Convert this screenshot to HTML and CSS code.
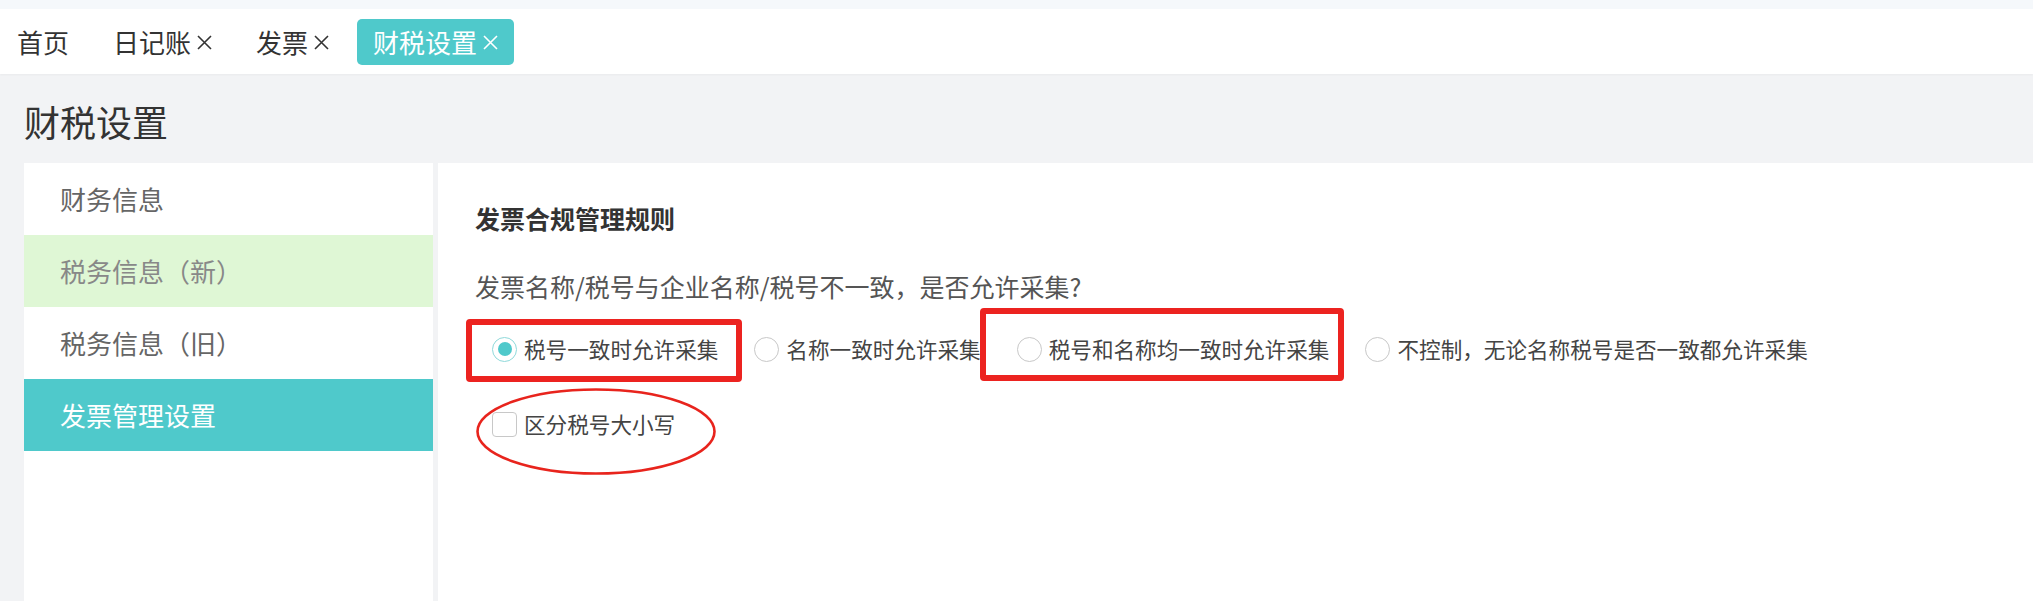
FILE: index.html
```html
<!DOCTYPE html>
<html lang="zh-CN">
<head>
<meta charset="utf-8">
<title>财税设置</title>
<link rel="stylesheet" href="styles.css">
</head>
<body>
<div class="topstrip"></div>
<div class="tabbar">
  <div class="tab">首页</div>
  <div class="tab">日记账<svg class="close" width="15" height="15" viewBox="0 0 15 15"><path d="M1 1L14 14M14 1L1 14" stroke="currentColor" stroke-width="1.6" fill="none"/></svg></div>
  <div class="tab">发票<svg class="close" width="15" height="15" viewBox="0 0 15 15"><path d="M1 1L14 14M14 1L1 14" stroke="currentColor" stroke-width="1.6" fill="none"/></svg></div>
  <div class="tab active">财税设置<svg class="close" width="15" height="15" viewBox="0 0 15 15"><path d="M1 1L14 14M14 1L1 14" stroke="currentColor" stroke-width="1.6" fill="none"/></svg></div>
</div>
<div class="header">财税设置</div>
<div class="layout">
  <div class="sidebar">
    <div class="item">财务信息</div>
    <div class="item hover">税务信息（新）</div>
    <div class="item">税务信息（旧）</div>
    <div class="item active">发票管理设置</div>
  </div>
  <div class="main">
    <div class="section-title">发票合规管理规则</div>
    <div class="question">发票名称/税号与企业名称/税号不一致，是否允许采集?</div>
    <div class="radios">
      <label class="radio checked"><span class="dot"></span><span class="text">税号一致时允许采集</span></label>
      <label class="radio"><span class="dot"></span><span class="text">名称一致时允许采集</span></label>
      <label class="radio"><span class="dot"></span><span class="text">税号和名称均一致时允许采集</span></label>
      <label class="radio"><span class="dot"></span><span class="text">不控制，无论名称税号是否一致都允许采集</span></label>
    </div>
    <label class="check"><span class="box"></span><span class="text">区分税号大小写</span></label>

    <div class="mark mark-1"></div>
    <div class="mark mark-2"></div>
    <svg class="mark-ellipse" width="244" height="91" viewBox="0 0 244 91">
      <ellipse cx="122" cy="45.5" rx="118.5" ry="42" fill="none" stroke="#e8241d" stroke-width="2.6"/>
    </svg>
  </div>
</div>
</body>
</html>
```
FILE: styles.css
```css
* { box-sizing: border-box; }
html, body {
  margin: 0;
  padding: 0;
}
body {
  width: 2033px;
  height: 601px;
  overflow: hidden;
  background: #f2f3f5;
  font-family: "Noto Sans CJK SC", "Noto Sans", sans-serif;
  color: #333;
}
.topstrip {
  height: 9px;
  background: #f5f8fb;
}
.tabbar {
  height: 65px;
  background: #fff;
  display: flex;
  align-items: center;
  gap: 12px;
  padding-left: 1px;
  box-shadow: 0 1px 2px rgba(0,0,0,0.04);
  position: relative;
}
.tab {
  height: 46px;
  line-height: 46px;
  padding: 0 16px;
  font-size: 26px;
  color: #333;
  border-radius: 5px;
  display: flex;
  align-items: center;
  white-space: nowrap;
}
.tab .close {
  flex: none;
  margin-left: 6px;
  margin-top: 1px;
}
.tab.active {
  background: #4fc9cb;
  color: #fff;
}
.header {
  padding: 23px 0 18px 24px;
  line-height: 48px;
  font-size: 36px;
  color: #333;
}
.layout {
  display: flex;
  gap: 5px;
  padding-left: 24px;
  height: 438px;
}
.sidebar {
  width: 409px;
  background: #fff;
}
.item {
  height: 72px;
  line-height: 72px;
  padding-left: 36px;
  font-size: 26px;
  color: #666;
}
.item.hover {
  background: #dff7d5;
  color: #888;
}
.item.active {
  background: #4fc9cb;
  color: #fff;
}
.main {
  flex: 1;
  background: #fff;
  position: relative;
  padding: 38px 0 0 37px;
}
.section-title {
  font-size: 25px;
  line-height: 34px;
  font-weight: bold;
  color: #333;
}
.question {
  margin-top: 34px;
  font-size: 25px;
  line-height: 34px;
  color: #555;
}
.radios {
  margin-top: 29px;
  padding-left: 17px;
  display: flex;
  align-items: center;
  gap: 36px;
  height: 34px;
}
.radio, .check {
  display: flex;
  flex: none;
  align-items: center;
  gap: 7px;
  font-size: 21.6px;
  line-height: 34px;
  color: #444;
  white-space: nowrap;
}
.dot {
  flex: none;
  width: 25px;
  height: 25px;
  border-radius: 50%;
  border: 1px solid #c8c8c8;
  background: #fff;
  display: flex;
  align-items: center;
  justify-content: center;
}
.radio.checked .dot {
  border-color: #8fd9da;
}
.radio.checked .dot::after {
  content: "";
  width: 14px;
  height: 14px;
  border-radius: 50%;
  background: #4fc9cb;
}
.check {
  margin-top: 41px;
  margin-left: 17px;
  width: max-content;
}
.box {
  flex: none;
  width: 25px;
  height: 25px;
  border: 1px solid #c8c8c8;
  border-radius: 4px;
  background: #fff;
}
.mark {
  position: absolute;
  border: 6px solid #ec2320;
  border-radius: 4px;
}
.mark-1 {
  left: 28px;
  top: 156px;
  width: 276px;
  height: 63px;
}
.mark-2 {
  left: 542px;
  top: 145px;
  width: 364px;
  height: 73px;
}
.mark-ellipse {
  position: absolute;
  left: 36px;
  top: 223px;
}
```
